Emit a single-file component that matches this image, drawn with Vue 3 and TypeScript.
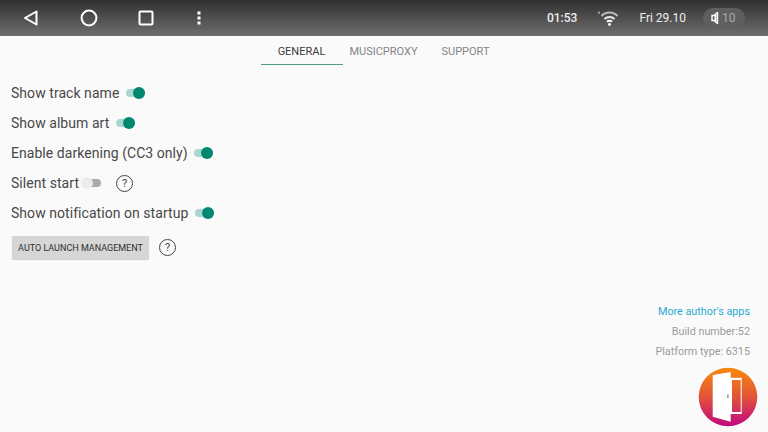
<template>
  <div class="screen">
    <header class="statusbar">
      <div class="nav">
        <svg class="nav-icon" width="18" height="18" viewBox="0 0 18 18">
          <path d="M14.5 2.5 L3 9 L14.5 15.5 Z" fill="none" stroke="#fff" stroke-width="2" stroke-linejoin="round" />
        </svg>
        <svg class="nav-icon" width="18" height="18" viewBox="0 0 18 18">
          <circle cx="9" cy="9" r="7.4" fill="none" stroke="#fff" stroke-width="2" />
        </svg>
        <svg class="nav-icon" width="18" height="18" viewBox="0 0 18 18">
          <rect x="2.5" y="2.5" width="13" height="13" rx="1" fill="none" stroke="#fff" stroke-width="2" />
        </svg>
        <svg class="nav-icon dots" width="18" height="18" viewBox="0 0 18 18">
          <rect x="7.5" y="2.5" width="3" height="3" fill="#fff" />
          <rect x="7.5" y="7.5" width="3" height="3" fill="#fff" />
          <rect x="7.5" y="12.5" width="3" height="3" fill="#fff" />
        </svg>
      </div>
      <div class="status">
        <span class="clock">01:53</span>
        <svg class="wifi" width="22" height="16" viewBox="0 0 22 16">
          <path d="M1 1.5 V4" stroke="#ddd" stroke-width="1" />
          <path d="M3.5 6 A11 11 0 0 1 19.5 6" fill="none" stroke="#bbb" stroke-width="2" />
          <path d="M6.5 9 A7 7 0 0 1 16.5 9" fill="none" stroke="#e8e8e8" stroke-width="2" />
          <path d="M9 11.8 A3.5 3.5 0 0 1 14 11.8" fill="none" stroke="#fff" stroke-width="2" />
          <circle cx="11.5" cy="14.4" r="1.4" fill="#fff" />
        </svg>
        <span class="date">Fri 29.10</span>
        <div class="volume">
          <svg width="8" height="12" viewBox="0 0 8 12">
            <path d="M6.5 .5 V11.5 L3 8.5 H1 V3.5 H3 Z" fill="none" stroke="#fff" stroke-width="1.4" />
            <path d="M4.5 3 V9" stroke="#fff" stroke-width="2" />
          </svg>
          <span>10</span>
        </div>
      </div>
    </header>

    <nav class="tabs">
      <div
        v-for="tab in tabs"
        :key="tab"
        class="tab"
        :class="{ active: tab === 'GENERAL' }"
      >
        {{ tab }}
      </div>
    </nav>

    <main class="content">
      <div class="settings">
        <div v-for="row in rows" :key="row.label" class="row">
          <span class="label">{{ row.label }}</span>
          <span class="switch" :class="{ on: row.on, tight: !row.on }">
            <span class="track"></span>
            <span class="thumb"></span>
          </span>
          <span v-if="row.help" class="help">?</span>
        </div>
      </div>

      <div class="launch">
        <button class="btn">AUTO LAUNCH MANAGEMENT</button>
        <span class="help">?</span>
      </div>

      <footer class="info">
        <a class="link">More author's apps</a>
        <span>Build number:52</span>
        <span>Platform type: 6315</span>
      </footer>
    </main>

    <svg class="logo" width="60" height="60" viewBox="0 0 60 60">
      <defs>
        <linearGradient id="logoGrad" gradientUnits="userSpaceOnUse" x1="0" y1="1" x2="0" y2="59">
          <stop offset="0" stop-color="#f7890d" />
          <stop offset="0.5" stop-color="#e2533a" />
          <stop offset="1" stop-color="#c0097f" />
        </linearGradient>
      </defs>
      <circle cx="30" cy="30" r="29.3" fill="url(#logoGrad)" />
      <path d="M14.7 8 L32.7 5 V10.7 H43.7 V47 H32.7 V54.7 L14.7 49.7 Z" fill="#fff" />
      <rect x="34" y="13" width="8.7" height="32" fill="url(#logoGrad)" />
      <rect x="29.3" y="27.5" width="1.2" height="3.5" fill="#777" />
    </svg>
  </div>
</template>

<script setup lang="ts">
interface SettingRow {
  label: string
  on: boolean
  help?: boolean
}

const tabs: string[] = ['GENERAL', 'MUSICPROXY', 'SUPPORT']

const rows: SettingRow[] = [
  { label: 'Show track name', on: true },
  { label: 'Show album art', on: true },
  { label: 'Enable darkening (CC3 only)', on: true },
  { label: 'Silent start', on: false, help: true },
  { label: 'Show notification on startup', on: true },
]
</script>

<style>
html,
body {
  margin: 0;
  background: #fafafa;
}
</style>

<style scoped>
.screen {
  position: relative;
  width: 768px;
  height: 432px;
  overflow: hidden;
  display: flex;
  flex-direction: column;
  background: #fafafa;
  font-family: Roboto, "Liberation Sans", sans-serif;
  color: #484848;
}

.statusbar {
  height: 36px;
  flex: none;
  display: flex;
  justify-content: space-between;
  align-items: center;
  background: linear-gradient(#303030, #6e6e6e);
}
.nav {
  display: flex;
  gap: 39px;
  padding-left: 22px;
}
.nav-icon {
  display: block;
}
.nav-icon:nth-child(2) {
  margin-left: 1px;
}
.dots {
  margin-left: -4px;
}
.status {
  display: flex;
  align-items: center;
  color: #eee;
  font-size: 12px;
  padding-right: 23px;
}
.clock {
  font-weight: 500;
}
.wifi {
  margin-left: 21px;
}
.date {
  margin-left: 19px;
}
.volume {
  display: flex;
  align-items: center;
  gap: 3px;
  width: 42px;
  height: 20px;
  box-sizing: border-box;
  margin-left: 17px;
  padding-left: 8px;
  border-radius: 10px;
  background: #5f5f5f;
  color: #aaa;
}

.tabs {
  display: flex;
  justify-content: center;
  height: 29px;
  flex: none;
  padding-right: 1px;
}
.tab {
  width: 82px;
  box-sizing: border-box;
  text-align: center;
  font-size: 11px;
  font-weight: 400;
  line-height: 32px;
  color: #858585;
}
.tab.active {
  color: #3c3c3c;
  border-bottom: 1px solid #4f9b8d;
}

.content {
  flex: 1;
  display: flex;
  flex-direction: column;
  padding: 13px 18px 0 11px;
}
.settings {
  display: flex;
  flex-direction: column;
}
.row {
  display: flex;
  align-items: center;
  height: 30px;
}
.label {
  font-size: 14px;
  letter-spacing: 0.05px;
}

.switch {
  position: relative;
  width: 20px;
  height: 14px;
  margin-left: 5.5px;
}
.switch.tight {
  margin-left: 2px;
}
.track {
  position: absolute;
  left: 1px;
  right: 0;
  top: 3px;
  height: 8px;
  border-radius: 4px;
  background: #a9d6cf;
}
.thumb {
  position: absolute;
  top: 1px;
  right: 0;
  width: 12px;
  height: 12px;
  border-radius: 50%;
  background: #00876f;
}
.switch:not(.on) .track {
  background: #aaa;
}
.switch:not(.on) .thumb {
  left: 0;
  right: auto;
  background: #ececec;
}

.help {
  display: inline-flex;
  align-items: center;
  justify-content: center;
  width: 15px;
  height: 15px;
  margin-left: 15px;
  border: 1px solid #444;
  border-radius: 50%;
  font-size: 11px;
  color: #444;
}

.launch {
  display: flex;
  align-items: center;
  margin-top: 8px;
  padding-left: 1px;
}
.btn {
  width: 137px;
  height: 23px;
  padding: 0;
  border: none;
  border-radius: 1px;
  background: #d6d6d6;
  box-shadow: 0 1px 1px #ccc;
  font-family: inherit;
  font-size: 9px;
  font-weight: 400;
  color: #2e2e2e;
}
.launch .help {
  margin-left: 10px;
}

.info {
  display: flex;
  flex-direction: column;
  align-items: flex-end;
  gap: 6px;
  margin-top: 46px;
  font-size: 10.8px;
  line-height: 14px;
  color: #9b9b9b;
}
.link {
  color: #29abd4;
}

.logo {
  position: absolute;
  left: 698px;
  top: 367px;
}
</style>
